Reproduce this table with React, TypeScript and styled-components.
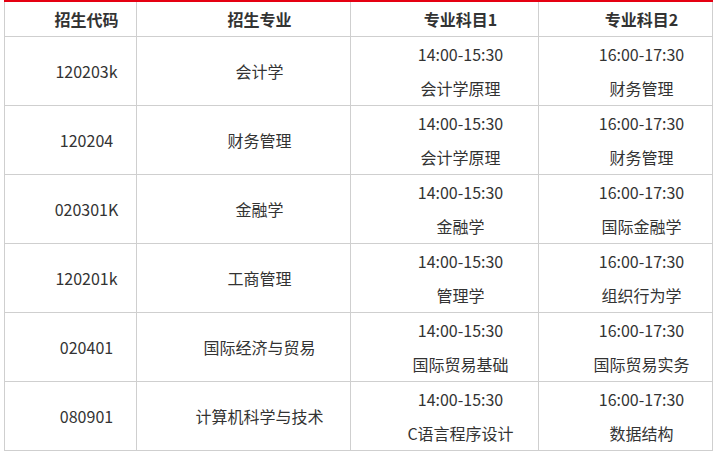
import React from "react";
import styled, { createGlobalStyle } from "styled-components";

const Global = createGlobalStyle`
  body {
    margin: 0;
    background: #fff;
    font-family: "Noto Sans CJK SC", "Noto Sans", sans-serif;
  }
`;

const Wrap = styled.div`
  padding-left: 4px;
`;

const Table = styled.table`
  width: 708px;
  table-layout: fixed;
  border-collapse: collapse;
  border-top: 2px solid #e50012;
  color: #333;
  font-size: 16px;
`;

const HeadCell = styled.th`
  height: 34px;
  line-height: 34px;
  padding: 0;
  border-left: 1px solid #cfcfcf;
  border-right: 1px solid #cfcfcf;
  border-bottom: 1px solid #cfcfcf;
  text-align: center;
  text-indent: 2em;
  font-weight: bold;
  color: #333;
`;

const Cell = styled.td`
  height: 68px;
  line-height: 34px;
  padding: 0;
  border: 1px solid #cfcfcf;
  text-align: center;
  text-indent: 2em;
  vertical-align: middle;
  white-space: nowrap;
`;

const Line = styled.div`
  height: 34px;
`;

interface Row {
  code: string;
  major: string;
  s1: string;
  s2: string;
}

const rows: Row[] = [
  { code: "120203k", major: "会计学", s1: "会计学原理", s2: "财务管理" },
  { code: "120204", major: "财务管理", s1: "会计学原理", s2: "财务管理" },
  { code: "020301K", major: "金融学", s1: "金融学", s2: "国际金融学" },
  { code: "120201k", major: "工商管理", s1: "管理学", s2: "组织行为学" },
  { code: "020401", major: "国际经济与贸易", s1: "国际贸易基础", s2: "国际贸易实务" },
  { code: "080901", major: "计算机科学与技术", s1: "C语言程序设计", s2: "数据结构" },
];

const Subject: React.FC<{ time: string; name: string }> = ({ time, name }) => (
  <>
    <Line>{time}</Line>
    <Line>{name}</Line>
  </>
);

export default function App() {
  return (
    <Wrap>
      <Global />
      <Table>
        <colgroup>
          <col style={{ width: 132 }} />
          <col style={{ width: 214 }} />
          <col style={{ width: 188 }} />
          <col style={{ width: 174 }} />
        </colgroup>
        <thead>
          <tr>
            <HeadCell>招生代码</HeadCell>
            <HeadCell>招生专业</HeadCell>
            <HeadCell>专业科目1</HeadCell>
            <HeadCell>专业科目2</HeadCell>
          </tr>
        </thead>
        <tbody>
          {rows.map((r) => (
            <tr key={r.code}>
              <Cell>{r.code}</Cell>
              <Cell>{r.major}</Cell>
              <Cell>
                <Subject time="14:00-15:30" name={r.s1} />
              </Cell>
              <Cell>
                <Subject time="16:00-17:30" name={r.s2} />
              </Cell>
            </tr>
          ))}
        </tbody>
      </Table>
    </Wrap>
  );
}
